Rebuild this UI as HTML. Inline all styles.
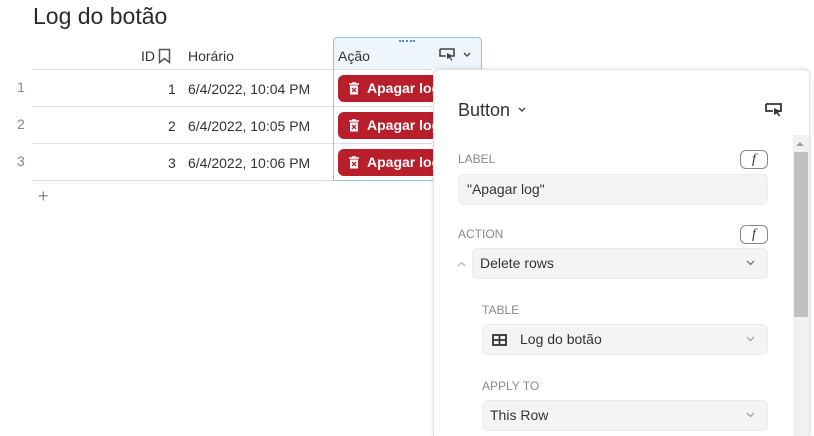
<!DOCTYPE html><html style="width:814px;height:436px;overflow:hidden"><head><meta charset="utf-8"><style>
*{margin:0;padding:0;box-sizing:border-box}
body{width:814px;height:436px;overflow:hidden;background:#fff;font-family:"Liberation Sans",sans-serif;color:#333;position:relative}
.a{position:absolute}
.t{font-size:14px;color:#333}
.hl{position:absolute;left:32px;width:400px;height:1px;background:#ddd}
.btn{position:absolute;left:338px;width:140px;height:27px;background:#b91f2a;border-radius:6px;color:#fff;font-weight:bold;font-size:14px;line-height:27px;padding-left:29px}
.btn svg{position:absolute;left:11px;top:7px}
.lbl{position:absolute;font-size:12px;color:#8a8a8a}
.f{position:absolute;left:740px;width:28px;height:19px;border:1px solid #888;border-radius:6px;font-family:"Liberation Serif",serif;font-style:italic;font-size:14px;text-align:center;line-height:17px;color:#333}
.in{position:absolute;background:#f4f4f4;border-radius:6px;height:31px;border:1px solid #ececec;font-size:14px;line-height:29px;color:#333}
.car{position:absolute;right:12px;top:11px}
</style></head><body>
<div class="a" style="left:33px;top:3px;font-size:23px;color:#2a2a2a">Log do botão</div>
<div class="a" style="left:333px;top:37px;width:149px;height:144px;background:#eef5fc;border:1px solid #8cc4f0;border-radius:4px 4px 0 0"></div>
<div class="a" style="left:334px;top:69px;width:147px;height:111px;background:#fff"></div>
<div class="a" style="left:399px;top:40px;width:16px;border-top:2px dotted #4a90d9"></div>
<div class="a t" style="left:141px;top:48px">ID</div>
<svg class="a" style="left:158px;top:48px" width="13" height="16"><path d="M1.5 1.5h10v13l-5-4-5 4z" fill="none" stroke="#555" stroke-width="1.5"/></svg>
<div class="a t" style="left:188px;top:48px">Horário</div>
<div class="a t" style="left:338px;top:48px">Ação</div>
<svg class="a" style="left:439px;top:48px" width="18" height="14"><path d="M1 1h14v7h-3M7 8H1V1" fill="none" stroke="#444" stroke-width="1.6"/><path d="M8 5l6 3-2.5 1 2 3-1 .8-2-3L8 11z" fill="#444"/></svg>
<svg class="a" style="left:463px;top:52px" width="8" height="6"><path d="M1 1l3 3 3-3" fill="none" stroke="#444" stroke-width="1.4"/></svg>
<div class="hl" style="top:69px"></div><div class="hl" style="top:106px"></div><div class="hl" style="top:143px"></div><div class="hl" style="top:180px"></div>
<div class="a" style="left:333px;top:69px;width:1px;height:112px;background:#8cc4f0"></div>
<div class="a" style="left:333px;top:180px;width:149px;height:1px;background:#8cc4f0"></div>
<div class="a" style="left:17px;top:79px;font-size:14px;color:#888">1</div>
<div class="a" style="left:17px;top:116px;font-size:14px;color:#888">2</div>
<div class="a" style="left:17px;top:153px;font-size:14px;color:#888">3</div>
<div class="a t" style="left:168px;top:81px">1</div><div class="a t" style="left:188px;top:81px">6/4/2022, 10:04 PM</div>
<div class="a t" style="left:168px;top:118px">2</div><div class="a t" style="left:188px;top:118px">6/4/2022, 10:05 PM</div>
<div class="a t" style="left:168px;top:155px">3</div><div class="a t" style="left:188px;top:155px">6/4/2022, 10:06 PM</div>
<div class="btn" style="top:75px"><svg width="10" height="13"><path d="M0 2h10M3 1h4" stroke="#fff" stroke-width="1.6"/><rect x="1" y="3.5" width="8" height="9" fill="#fff"/><path d="M3 6l4 4M7 6l-4 4" stroke="#b91f2a" stroke-width="1.3"/></svg>Apagar log</div>
<div class="btn" style="top:112px"><svg width="10" height="13"><path d="M0 2h10M3 1h4" stroke="#fff" stroke-width="1.6"/><rect x="1" y="3.5" width="8" height="9" fill="#fff"/><path d="M3 6l4 4M7 6l-4 4" stroke="#b91f2a" stroke-width="1.3"/></svg>Apagar log</div>
<div class="btn" style="top:149px"><svg width="10" height="13"><path d="M0 2h10M3 1h4" stroke="#fff" stroke-width="1.6"/><rect x="1" y="3.5" width="8" height="9" fill="#fff"/><path d="M3 6l4 4M7 6l-4 4" stroke="#b91f2a" stroke-width="1.3"/></svg>Apagar log</div>
<div class="a" style="left:38px;top:186px;font-size:18px;color:#888">+</div>
<div class="a" style="left:433px;top:69px;width:377px;height:367px;background:#fff;border:1px solid #e2e2e2;border-bottom:none;border-radius:6px 6px 0 0;box-shadow:0 0 6px rgba(0,0,0,.12)"></div>
<div class="a" style="left:458px;top:100px;font-size:18px;color:#333">Button</div>
<svg class="a" style="left:518px;top:107px" width="8" height="6"><path d="M1 1l3 3 3-3" fill="none" stroke="#444" stroke-width="1.4"/></svg>
<svg class="a" style="left:765px;top:103px" width="20" height="16"><path d="M1 1h15v7h-3M8 8H1V1" fill="none" stroke="#333" stroke-width="1.8"/><path d="M9 5l7 3.5-3 1 2.2 3.2-1.2.9-2.2-3.2L9 12z" fill="#333"/></svg>
<div class="a" style="left:793px;top:135px;width:16px;height:301px;background:#f1f1f1"></div>
<div class="a" style="left:794px;top:152px;width:14px;height:165px;background:#c1c1c1"></div>
<svg class="a" style="left:796px;top:141px" width="9" height="6"><path d="M0 5h8L4 1z" fill="#a0a0a0"/></svg>
<div class="lbl" style="left:458px;top:152px">LABEL</div>
<div class="f" style="top:150px">f</div>
<div class="in" style="left:458px;top:174px;width:310px;padding-left:8px">"Apagar log"</div>
<div class="lbl" style="left:458px;top:227px">ACTION</div>
<div class="f" style="top:225px">f</div>
<svg class="a" style="left:457px;top:261px" width="9" height="6"><path d="M1 5l3.5-3.5 3.5 3.5" fill="none" stroke="#bbb" stroke-width="1.3"/></svg>
<div class="in" style="left:472px;top:248px;width:296px;padding-left:7px">Delete rows<svg class="car" width="9" height="6"><path d="M1 1l3.5 3.5 3.5-3.5" fill="none" stroke="#777" stroke-width="1.3"/></svg></div>
<div class="lbl" style="left:482px;top:303px">TABLE</div>
<div class="in" style="left:482px;top:324px;width:286px;padding-left:37px">Log do botão<svg class="a" style="left:9px;top:9px" width="15" height="12"><rect x="1" y="1" width="13" height="10" fill="none" stroke="#333" stroke-width="1.8"/><path d="M1 6h13M7.5 1v10" stroke="#333" stroke-width="1.8"/></svg><svg class="car" width="9" height="6"><path d="M1 1l3.5 3.5 3.5-3.5" fill="none" stroke="#999" stroke-width="1.2"/></svg></div>
<div class="lbl" style="left:482px;top:379px">APPLY TO</div>
<div class="in" style="left:482px;top:400px;width:286px;padding-left:7px">This Row<svg class="car" width="9" height="6"><path d="M1 1l3.5 3.5 3.5-3.5" fill="none" stroke="#999" stroke-width="1.2"/></svg></div>
</body></html>
